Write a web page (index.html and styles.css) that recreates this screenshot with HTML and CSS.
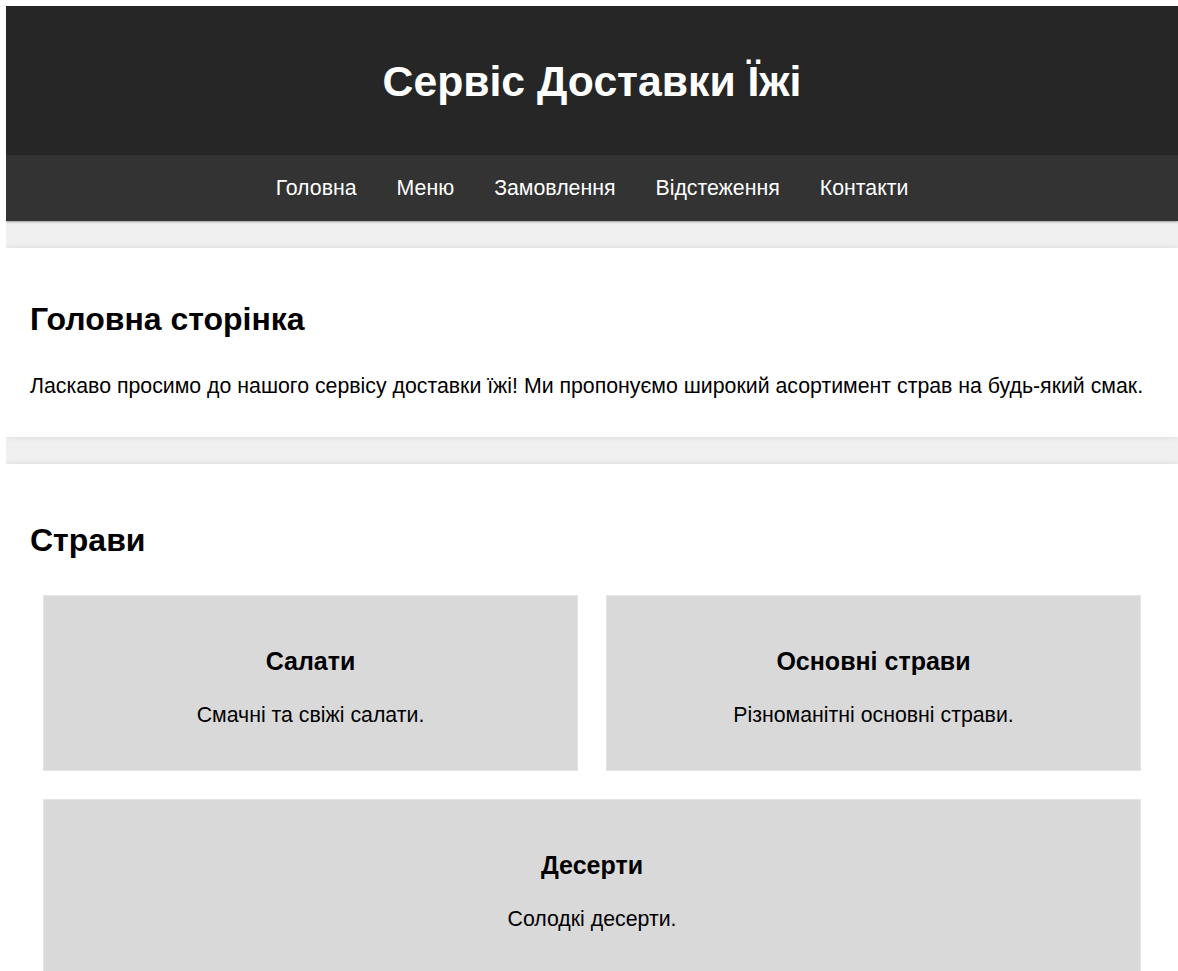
FILE: index.html
```html
<!DOCTYPE html>
<html lang="uk">
<head>
<meta charset="utf-8">
<title>Сервіс Доставки Їжі</title>
<link rel="stylesheet" href="styles.css">
</head>
<body>
<header class="site-header">
  <h1 class="site-title">Сервіс Доставки Їжі</h1>
</header>
<nav class="site-nav">
  <a href="#home">Головна</a>
  <a href="#menu">Меню</a>
  <a href="#order">Замовлення</a>
  <a href="#tracking">Відстеження</a>
  <a href="#contacts">Контакти</a>
</nav>
<main class="content">
  <section class="panel panel-intro" id="home">
    <h2 class="panel-title">Головна сторінка</h2>
    <p class="panel-text">Ласкаво просимо до нашого сервісу доставки їжі! Ми пропонуємо широкий асортимент страв на будь-який смак.</p>
  </section>
  <section class="panel panel-menu" id="menu">
    <h2 class="panel-title">Страви</h2>
    <div class="dishes">
      <div class="dish">
        <h3 class="dish-name">Салати</h3>
        <p class="dish-desc">Смачні та свіжі салати.</p>
      </div>
      <div class="dish">
        <h3 class="dish-name">Основні страви</h3>
        <p class="dish-desc">Різноманітні основні страви.</p>
      </div>
      <div class="dish dish-wide">
        <h3 class="dish-name">Десерти</h3>
        <p class="dish-desc">Солодкі десерти.</p>
      </div>
    </div>
  </section>
</main>
</body>
</html>
```

FILE: styles.css
```css
html {
  background: #ffffff;
}

body {
  margin: 6px 0 0 6px;
  background: #f0f0f0;
  font-family: "Liberation Sans", Arial, Helvetica, sans-serif;
  color: #000;
}

/* Dark top banner with the site name */
.site-header {
  background: #262626;
  height: 149px;
  display: flex;
  align-items: center;
  justify-content: center;
}

.site-title {
  margin: 0;
  color: #fff;
  font-size: 42.7px;
  line-height: 48px;
  font-weight: bold;
}

/* Navigation strip */
.site-nav {
  background: #333333;
  height: 66px;
  display: flex;
  align-items: center;
  justify-content: center;
  box-shadow: 0 1px 2px rgba(0, 0, 0, 0.35);
  position: relative;
}

.site-nav a {
  color: #fff;
  text-decoration: none;
  font-size: 21.3px;
  line-height: 24px;
  padding: 0 20px;
}

/* Page body: white panels on a light grey backdrop */
.content {
  display: flex;
  flex-direction: column;
  gap: 27px;
  padding-top: 27px;
}

.panel {
  background: #fff;
  padding: 0 24px;
  box-shadow: 0 0 6px rgba(0, 0, 0, 0.1);
}

.panel-title {
  margin: 0;
  font-size: 32px;
  line-height: 38px;
  font-weight: bold;
}

.panel-intro {
  padding-top: 52px;
  padding-bottom: 39px;
}

.panel-text {
  margin: 36px 0 0;
  font-size: 21.3px;
  line-height: 24px;
}

.panel-menu {
  padding-top: 57px;
  padding-bottom: 40px;
}

/* Dish cards */
.dishes {
  display: grid;
  grid-template-columns: 1fr 1fr;
  gap: 28px;
  margin-top: 36px;
  padding: 0 13px;
}

.dish {
  background: #d9d9d9;
  border: 1px solid #e4e4e4;
  text-align: center;
  padding: 51px 20px 43px;
}

.dish-wide {
  grid-column: 1 / span 2;
}

.dish-name {
  margin: 0;
  font-size: 25px;
  line-height: 28px;
  font-weight: bold;
}

.dish-desc {
  margin: 28px 0 0;
  font-size: 21.3px;
  line-height: 24px;
}
```
